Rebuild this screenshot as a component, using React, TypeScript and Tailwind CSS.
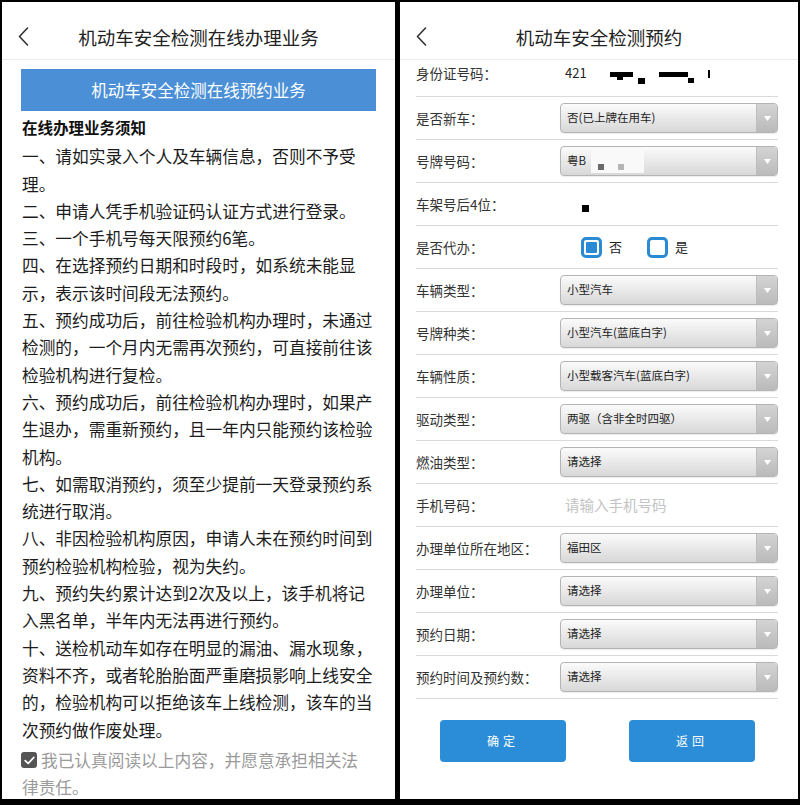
import React from 'react';

const noticeLines = [
    '一、请如实录入个人及车辆信息，否则不予受',
    '理。',
    '二、申请人凭手机验证码认证方式进行登录。',
    '三、一个手机号每天限预约6笔。',
    '四、在选择预约日期和时段时，如系统未能显',
    '示，表示该时间段无法预约。',
    '五、预约成功后，前往检验机构办理时，未通过',
    '检测的，一个月内无需再次预约，可直接前往该',
    '检验机构进行复检。',
    '六、预约成功后，前往检验机构办理时，如果产',
    '生退办，需重新预约，且一年内只能预约该检验',
    '机构。',
    '七、如需取消预约，须至少提前一天登录预约系',
    '统进行取消。',
    '八、非因检验机构原因，申请人未在预约时间到',
    '预约检验机构检验，视为失约。',
    '九、预约失约累计达到2次及以上，该手机将记',
    '入黑名单，半年内无法再进行预约。',
    '十、送检机动车如存在明显的漏油、漏水现象，',
    '资料不齐，或者轮胎胎面严重磨损影响上线安全',
    '的，检验机构可以拒绝该车上线检测，该车的当',
    '次预约做作废处理。',
];

const BackIcon = () => (
    <svg width="11" height="19" viewBox="0 0 11 19" fill="none">
        <polyline points="9.5,1 1.5,9.5 9.5,18" stroke="#333" strokeWidth="1.6" strokeLinejoin="round" strokeLinecap="round" />
    </svg>
);

const Header = ({ title }: { title: string }) => (
    <div className="flex h-[58px] shrink-0 items-center border-b border-[#ececec] pt-[12px]">
        <div className="flex w-[60px] justify-start pl-[16px]">
            <BackIcon />
        </div>
        <div className="flex-1 text-center text-[18.5px] leading-[22px] text-[#222]">{title}</div>
        <div className="w-[60px]" />
    </div>
);

// grey gradient select as drawn by the old webview
const Select = ({ value, children }: { value: string; children?: React.ReactNode }) => (
    <div className="relative flex h-[30px] w-[218px] items-center overflow-hidden rounded-[4px] border border-[#b4b4b4] bg-linear-to-b from-[#fbfbfb] to-[#d8d8d8] shadow-[0_1px_1px_rgba(0,0,0,0.08)]">
        <span className="flex-1 whitespace-nowrap pl-[6px] text-[11.5px] text-[#222]">{value}</span>
        <span className="flex h-full w-[21px] items-center justify-center border-l border-[#bdbdbd] bg-linear-to-b from-[#d4d4d4] to-[#bababa]">
            <svg width="7" height="5" viewBox="0 0 7 5">
                <polygon points="0,0 7,0 3.5,5" fill="#fff" />
            </svg>
        </span>
        {children}
    </div>
);

const Row = ({ label, children }: { label: string; children: React.ReactNode }) => (
    <div className="flex h-[43px] items-center border-b border-[#dadada]">
        <div className="w-[144px] shrink-0 text-[13.5px] text-[#333]">{label}</div>
        {children}
    </div>
);

const RadioBox = ({ checked }: { checked?: boolean }) => (
    <span className="flex h-[21px] w-[21px] items-center justify-center rounded-[5px] border-[3px] border-[#2b8ad4] bg-white">
        {checked && <span className="h-[11px] w-[11px] rounded-[1px] bg-[#2b8ad4]" />}
    </span>
);

export default function App() {
    return (
        <div className="flex h-[805px] w-[800px] bg-black pb-[6px] pl-[2px] pr-[2px] pt-[2px] font-['Noto_Sans_CJK_SC','Noto_Sans',sans-serif]">
            {/* left: notice page */}
            <div className="flex w-[393px] flex-col overflow-hidden bg-white">
                <Header title="机动车安全检测在线办理业务" />
                <div className="px-[19px]">
                    <div className="mt-[9px] flex h-[42px] items-center justify-center bg-[#4b8fd7] text-[16.5px] text-white">
                        机动车安全检测在线预约业务
                    </div>
                    <div className="mt-[3px] pl-[1px] text-[15.5px] font-bold leading-[27.3px] text-[#111]">在线办理业务须知</div>
                    <div className="mt-[2px] pl-[1px] text-[16.7px] leading-[27.3px] text-[#1c1c1c]">
                        {noticeLines.map((line, i) => (
                            <div key={i} className="whitespace-nowrap">{line}</div>
                        ))}
                    </div>
                    <div className="mt-[3px] text-[16.7px] leading-[27.3px] text-[#9a9a9a]">
                        <div className="flex items-center gap-[4px] whitespace-nowrap">
                            <span className="flex h-[16px] w-[16px] items-center justify-center rounded-[3px] bg-[#555]">
                                <svg width="11" height="9" viewBox="0 0 11 9" fill="none">
                                    <polyline points="1.2,4.6 4.2,7.5 9.8,1.4" stroke="#fff" strokeWidth="1.7" strokeLinecap="round" strokeLinejoin="round" />
                                </svg>
                            </span>
                            我已认真阅读以上内容，并愿意承担相关法
                        </div>
                        <div className="pl-[1px]">律责任。</div>
                    </div>
                </div>
            </div>

            <div className="w-[5px]" />

            {/* right: booking form */}
            <div className="flex w-[398px] flex-col overflow-hidden bg-white">
                <Header title="机动车安全检测预约" />
                <div className="pl-[16px] pr-[20px]">
                    <div className="flex h-[37px] items-center border-b border-[#dadada] pb-[10px]">
                        <div className="w-[144px] shrink-0 text-[13.5px] text-[#333]">身份证号码：</div>
                        <div className="relative ml-[5px] h-[20px] w-[200px] text-[13px] leading-[20px] text-[#222]">
                            421
                            <span className="absolute left-[45px] top-[9px] h-[5px] w-[23px] bg-black" />
                            <span className="absolute left-[52px] top-[13px] h-[4px] w-[6px] bg-black" />
                            <span className="absolute left-[73px] top-[15px] h-[6px] w-[7px] bg-black" />
                            <span className="absolute left-[94px] top-[9px] h-[5px] w-[29px] bg-black" />
                            <span className="absolute left-[123px] top-[15px] h-[5px] w-[6px] bg-black" />
                            <span className="absolute left-[143px] top-[7px] h-[8px] w-[2px] bg-black" />
                        </div>
                    </div>
                    <Row label="是否新车：">
                        <Select value="否(已上牌在用车)" />
                    </Row>
                    <Row label="号牌号码：">
                        <Select value="粤B">
                            <span className="absolute left-[30px] top-0 h-[26px] w-[53px] bg-[#f9f9f9]" />
                            <span className="absolute left-[37px] top-[17px] h-[6px] w-[6px] bg-[#6a6a6a]" />
                            <span className="absolute left-[57px] top-[17px] h-[6px] w-[6px] bg-[#b5b5b5]" />
                        </Select>
                    </Row>
                    <Row label="车架号后4位：">
                        <span className="ml-[22px] mt-[8px] h-[7px] w-[7px] bg-black" />
                    </Row>
                    <Row label="是否代办：">
                        <div className="ml-[21px] flex items-center text-[13px] text-[#222]">
                            <RadioBox checked />
                            <span className="ml-[7px]">否</span>
                            <span className="ml-[25px]"><RadioBox /></span>
                            <span className="ml-[7px]">是</span>
                        </div>
                    </Row>
                    <Row label="车辆类型：">
                        <Select value="小型汽车" />
                    </Row>
                    <Row label="号牌种类：">
                        <Select value="小型汽车(蓝底白字)" />
                    </Row>
                    <Row label="车辆性质：">
                        <Select value="小型载客汽车(蓝底白字)" />
                    </Row>
                    <Row label="驱动类型：">
                        <Select value="两驱（含非全时四驱）" />
                    </Row>
                    <Row label="燃油类型：">
                        <Select value="请选择" />
                    </Row>
                    <Row label="手机号码：">
                        <span className="ml-[5px] text-[14.5px] text-[#c3c3c3]">请输入手机号码</span>
                    </Row>
                    <Row label="办理单位所在地区：">
                        <Select value="福田区" />
                    </Row>
                    <Row label="办理单位：">
                        <Select value="请选择" />
                    </Row>
                    <Row label="预约日期：">
                        <Select value="请选择" />
                    </Row>
                    <Row label="预约时间及预约数：">
                        <Select value="请选择" />
                    </Row>
                </div>
                <div className="mt-[21px] flex gap-[63px] pl-[40px]">
                    <button className="h-[42px] w-[126px] rounded-[4px] bg-[#2b8dd8] text-[12px] tracking-[4px] text-white">确定</button>
                    <button className="h-[42px] w-[126px] rounded-[4px] bg-[#2b8dd8] text-[12px] tracking-[4px] text-white">返回</button>
                </div>
            </div>
        </div>
    );
}
